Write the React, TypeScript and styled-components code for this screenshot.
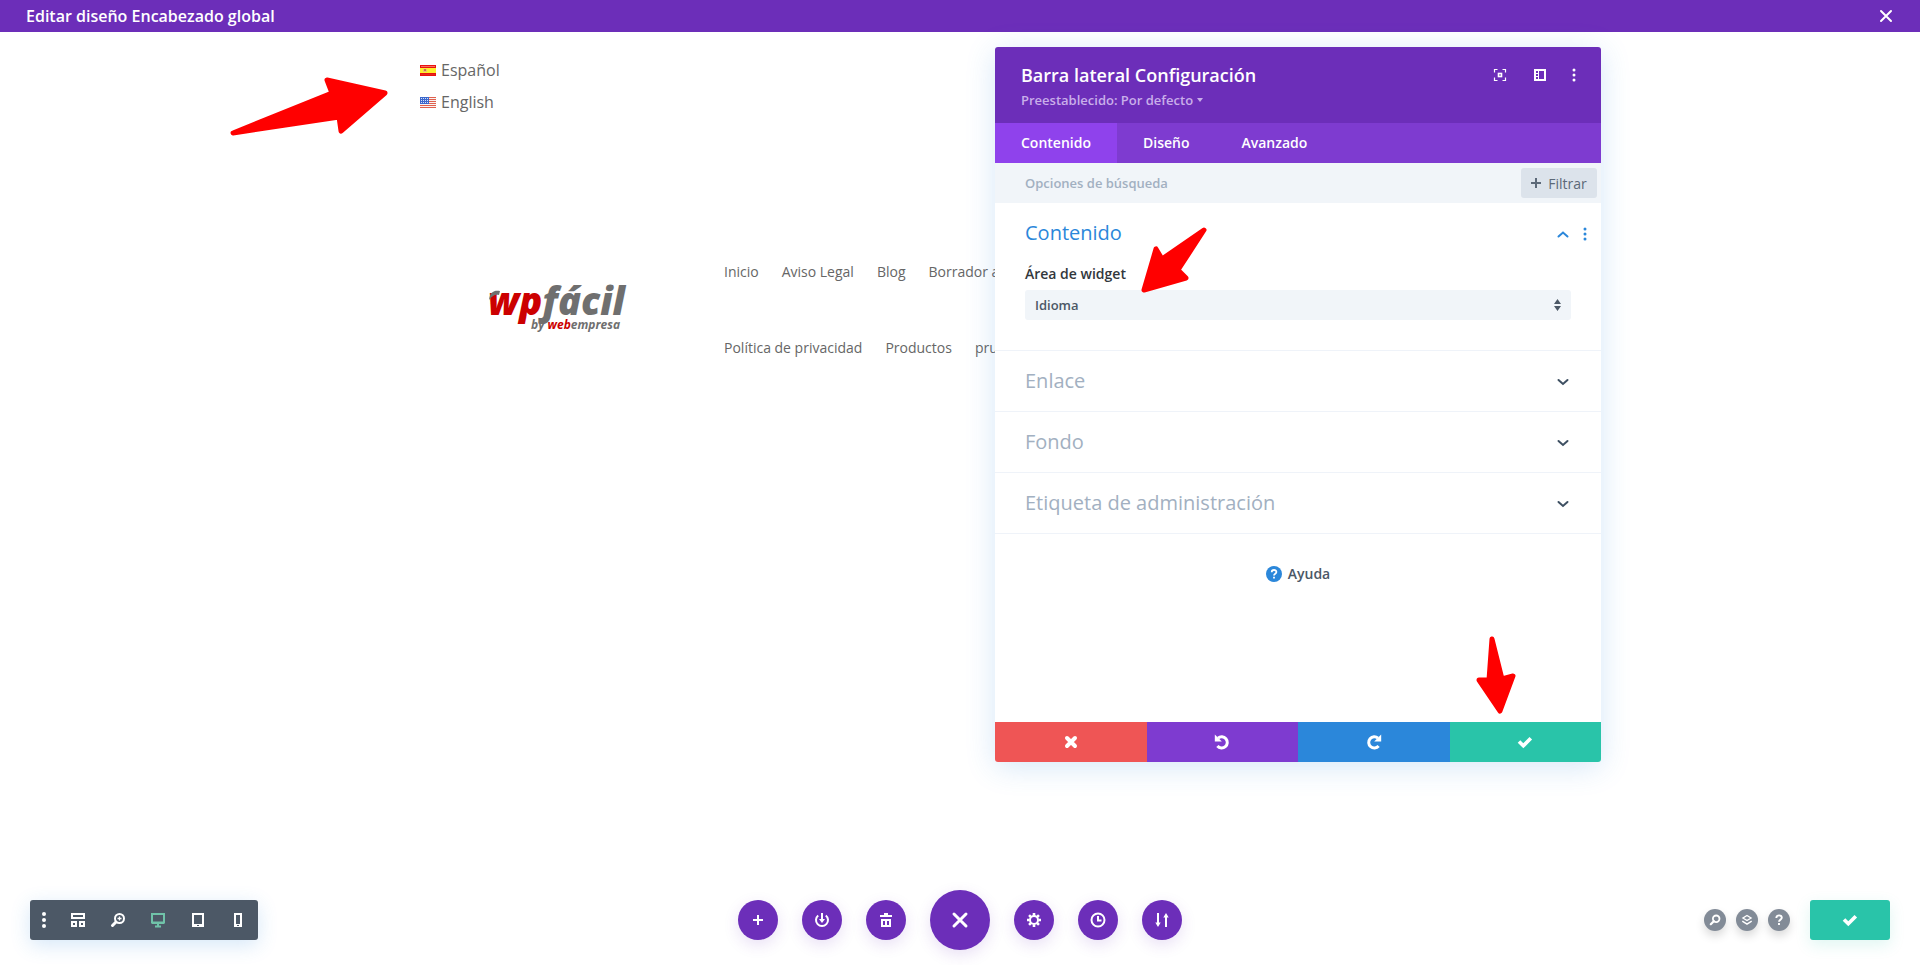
import React from "react";
import styled, { createGlobalStyle } from "styled-components";

const purple = "#6c2eb9";
const teal = "#29c4a9";
const blue = "#2b87da";
const slate = "#4c5866";

const GlobalStyle = createGlobalStyle`
  *, *::before, *::after { box-sizing: border-box; }
  body {
    margin: 0;
    background: #fff;
    color: #666;
    font-family: "Open Sans", "Noto Sans", sans-serif;
    font-size: 14px;
  }
  button, input, select { font: inherit; }
  button { border: 0; padding: 0; cursor: pointer; }
  svg { display: block; flex: none; overflow: visible; }
`;

const Page = styled.div`
  position: relative;
  display: flex;
  flex-direction: column;
  min-height: 100vh;
  overflow: hidden;
`;

const TopBar = styled.header`
  display: flex;
  align-items: center;
  justify-content: space-between;
  height: 32px;
  padding: 0 24px 0 26px;
  background: ${purple};
  color: #fff;
`;

const TopTitle = styled.h1`
  margin: 0;
  font-size: 16px;
  line-height: 24px;
  font-weight: 600;
`;

const IconButton = styled.button`
  display: flex;
  align-items: center;
  justify-content: center;
  width: 20px;
  height: 20px;
  background: none;
  color: ${(p) => p.color ?? "#fff"};
`;

const Container = styled.main`
  position: relative;
  width: 80%;
  max-width: 1080px;
  margin: 0 auto;
  padding-top: 26px;
`;

const Languages = styled.ul`
  list-style: none;
  margin: 0;
  padding: 0;
  display: grid;
  gap: 8px;
`;

const LanguageLink = styled.a`
  display: inline-flex;
  align-items: center;
  gap: 5px;
  color: #666;
  font-size: 16px;
  line-height: 24px;
  text-decoration: none;
`;

const SiteHeader = styled.div`
  display: flex;
  align-items: center;
  margin-top: 119px;
`;

const LogoColumn = styled.div`
  flex: none;
  width: 304px;
  padding: 0 0 6px 68px;
`;

const Menu = styled.nav`
  min-width: 0;
`;

const MenuRow = styled.div`
  display: flex;
  align-items: center;
  gap: 23px;
  height: 76px;
  white-space: nowrap;
`;

const MenuLink = styled.a`
  color: #666;
  font-size: 14px;
  text-decoration: none;
`;

const Modal = styled.section`
  position: absolute;
  top: 47px;
  left: calc(50% + 35px);
  display: flex;
  flex-direction: column;
  width: 606px;
  border-radius: 3px;
  background: #fff;
  box-shadow: 0 5px 30px rgba(43, 135, 218, 0.2);
`;

const ModalHeader = styled.div`
  display: flex;
  justify-content: space-between;
  height: 76px;
  padding: 16px 23px 0 26px;
  border-radius: 3px 3px 0 0;
  background: ${purple};
`;

const ModalTitle = styled.h2`
  margin: 0;
  color: #fff;
  font-size: 18px;
  line-height: 24px;
  font-weight: 600;
`;

const PresetButton = styled.button`
  display: flex;
  align-items: center;
  gap: 4px;
  background: none;
  color: #c9aeea;
  font-size: 13px;
  line-height: 26px;
  font-weight: 600;
`;

const ModalTools = styled.div`
  display: flex;
  gap: 20px;
  height: 24px;
  align-items: center;
`;

const ToolButton = styled(IconButton)<{ $narrow?: boolean }>`
  width: ${(p) => (p.$narrow ? "8px" : "20px")};
`;

const Tabs = styled.div`
  display: flex;
  height: 40px;
  background: #7e3bd0;
`;

const Tab = styled.button<{ $active?: boolean }>`
  padding: 0 26px;
  background: ${(p) => (p.$active ? "#8f42ec" : "transparent")};
  color: #fff;
  font-size: 14px;
  line-height: 20px;
  font-weight: 600;
`;

const SearchRow = styled.div`
  display: flex;
  align-items: center;
  height: 40px;
  padding: 0 4px 0 30px;
  background: #f1f5f9;
`;

const SearchInput = styled.input`
  flex: 1;
  min-width: 0;
  height: 30px;
  padding: 0;
  border: 0;
  background: none;
  color: ${slate};
  font-size: 13px;
  font-weight: 600;
  &::placeholder { color: #a2b0c1; opacity: 1; }
`;

const FilterButton = styled.button`
  display: flex;
  align-items: center;
  justify-content: center;
  gap: 7px;
  width: 76px;
  height: 30px;
  border-radius: 3px;
  background: #dce3eb;
  color: #5c6978;
  font-size: 14px;
`;

const Body = styled.div`
  min-height: 519px;
`;

const Group = styled.section<{ $open?: boolean }>`
  padding-bottom: ${(p) => (p.$open ? "30px" : "0")};
  border-bottom: 1px solid #eff3f9;
`;

const GroupHeader = styled.div`
  display: flex;
  align-items: center;
  height: 60px;
  padding: 0 5px 0 30px;
`;

const GroupTitle = styled.h3<{ $open?: boolean }>`
  flex: 1;
  margin: 0;
  color: ${(p) => (p.$open ? blue : "#a2b0c1")};
  font-size: 20px;
  line-height: 28px;
  font-weight: 400;
`;

const GroupActions = styled.div<{ $open?: boolean }>`
  display: flex;
  gap: 2px;
  width: 43px;
  padding-top: ${(p) => (p.$open ? "2px" : "0")};
`;

const Field = styled.div`
  display: flex;
  flex-direction: column;
  gap: 5px;
  padding: 0 30px;
`;

const Label = styled.label`
  color: #32373c;
  font-size: 14px;
  line-height: 22px;
  font-weight: 600;
`;

const SelectBox = styled.div`
  position: relative;
  svg {
    position: absolute;
    right: 10px;
    top: 9px;
    pointer-events: none;
  }
`;

const Select = styled.select`
  display: block;
  appearance: none;
  width: 100%;
  height: 30px;
  padding: 0 30px 0 10px;
  border: 0;
  border-radius: 3px;
  background: #f1f5f9;
  color: ${slate};
  font-size: 13px;
  font-weight: 600;
`;

const Help = styled.button`
  display: flex;
  align-items: center;
  gap: 6px;
  margin: 30px auto 0;
  background: none;
  color: ${slate};
  font-size: 14px;
  line-height: 20px;
  font-weight: 600;
`;

const ModalFooter = styled.div`
  display: grid;
  grid-template-columns: repeat(4, 1fr);
  height: 40px;
  border-radius: 0 0 3px 3px;
  overflow: hidden;
`;

const FooterButton = styled.button<{ $bg: string }>`
  display: flex;
  align-items: center;
  justify-content: center;
  background: ${(p) => p.$bg};
  color: #fff;
`;

const BottomBar = styled.footer`
  display: grid;
  grid-template-columns: 1fr auto 1fr;
  align-items: center;
  margin-top: auto;
  padding: 0 30px 15px;
`;

const ViewTools = styled.div`
  display: flex;
  justify-self: start;
  height: 40px;
  border-radius: 3px;
  background: ${slate};
  box-shadow: 0 5px 20px rgba(43, 135, 218, 0.2);
`;

const ViewButton = styled.button<{ $active?: boolean; $first?: boolean }>`
  display: flex;
  align-items: center;
  justify-content: center;
  width: ${(p) => (p.$first ? "28px" : "40px")};
  background: none;
  color: ${(p) => (p.$active ? "#70c3a9" : "#fff")};
`;

const Circles = styled.div`
  display: flex;
  align-items: center;
  gap: 24px;
`;

const Circle = styled.button<{ $large?: boolean }>`
  display: flex;
  align-items: center;
  justify-content: center;
  width: ${(p) => (p.$large ? "60px" : "40px")};
  height: ${(p) => (p.$large ? "60px" : "40px")};
  border-radius: 50%;
  background: ${purple};
  color: #fff;
  box-shadow: 0 5px 15px rgba(108, 46, 185, 0.15);
`;

const RightTools = styled.div`
  display: flex;
  align-items: center;
  justify-self: end;
  gap: 10px;
`;

const SmallCircle = styled.button`
  display: flex;
  align-items: center;
  justify-content: center;
  width: 22px;
  height: 22px;
  border-radius: 50%;
  background: #828b97;
  color: #fff;
  box-shadow: 0 5px 10px rgba(0, 0, 0, 0.15);
`;

const SaveButton = styled.button`
  display: flex;
  align-items: center;
  justify-content: center;
  width: 80px;
  height: 40px;
  margin-left: 10px;
  border-radius: 3px;
  background: ${teal};
  color: #fff;
  box-shadow: 0 5px 15px rgba(41, 196, 169, 0.15);
`;

const Arrow = styled.svg<{ $x: number; $y: number }>`
  position: absolute;
  left: ${(p) => p.$x}px;
  top: ${(p) => p.$y}px;
  fill: #f00;
  stroke: #f00;
  stroke-width: 5;
  stroke-linejoin: round;
  pointer-events: none;
`;

const Dots = ({ gap = 5, r = 1.5 }: { gap?: number; r?: number }) => (
  <svg width="16" height="16" viewBox="0 0 16 16" fill="currentColor">
    <circle cx="8" cy={8 - gap} r={r} />
    <circle cx="8" cy="8" r={r} />
    <circle cx="8" cy={8 + gap} r={r} />
  </svg>
);

const Cross = ({ size, width }: { size: number; width: number }) => (
  <svg width={size} height={size} viewBox={`0 0 ${size} ${size}`} stroke="currentColor" strokeWidth={width} strokeLinecap="round">
    <path d={`M2 2L${size - 2} ${size - 2}M${size - 2} 2L2 ${size - 2}`} />
  </svg>
);

const Check = () => (
  <svg width="16" height="16" viewBox="0 0 16 16" fill="none" stroke="currentColor" strokeWidth="3.6">
    <path d="M2 7.500L6.300 11.800L13.800 4.200" />
  </svg>
);

const Chevron = ({ up }: { up?: boolean }) => (
  <svg width="20" height="20" viewBox="0 0 20 20" fill="none" stroke="currentColor" strokeWidth="2" strokeLinecap="round">
    <path d={up ? "M5.500 12.500L10 8.500L14.500 12.500" : "M5.500 9L10 13L14.500 9"} />
  </svg>
);

const Plus = ({ size = 10 }: { size?: number }) => (
  <svg width={size} height={size} viewBox="0 0 10 10" stroke="currentColor" strokeWidth="2">
    <path d="M5 0V10M0 5H10" />
  </svg>
);

const Magnifier = () => (
  <svg width="16" height="16" viewBox="0 0 16 16" fill="none" stroke="currentColor">
    <circle cx="9.500" cy="6.500" r="4.500" strokeWidth="2" />
    <path d="M9.500 4.500V8.500M7.500 6.500H11.500" strokeWidth="1.300" />
    <path d="M6 10L2.500 13.500" strokeWidth="3" strokeLinecap="round" />
  </svg>
);

const Redo = ({ flip }: { flip?: boolean }) => (
  <svg width="16" height="16" viewBox="0 0 16 16" fill="none" stroke="currentColor">
    <g transform={flip ? "matrix(-1 0 0 1 16 0)" : undefined}>
      <path d="M12.600 12A5.600 5.600 0 1 1 12 4.200" strokeWidth="3" />
      <path d="M15.200 0.600V7.600H8.200Z" fill="currentColor" stroke="none" />
    </g>
  </svg>
);

const SpainFlag = () => (
  <svg width="16" height="11" viewBox="0 0 16 11">
    <rect width="16" height="11" fill="#ea1010" />
    <rect x="1" y="1" width="14" height="1" fill="#f4705c" />
    <rect x="1" y="9" width="14" height="1" fill="#e02a1c" />
    <rect y="3" width="16" height="5" fill="#fdf02e" />
    <rect x="3" y="4" width="4" height="3" fill="#ecc46a" />
    <rect x="4" y="4" width="2" height="2" fill="#d0704a" />
  </svg>
);

const UsaFlag = () => (
  <svg width="16" height="11" viewBox="0 0 16 11">
    <rect width="16" height="11" fill="#f8f4f2" />
    {[0, 2, 4, 6, 8, 10].map((y) => (
      <rect key={y} y={y} width="16" height="1" fill="#e0604e" />
    ))}
    <rect width="9" height="7" fill="#3c68cc" />
    {[1, 3, 5].map((y) =>
      [1, 3, 5, 7].map((x) => <rect key={`${x}-${y}`} x={x} y={y} width="1" height="1" fill="#d4e0fa" />)
    )}
  </svg>
);

const Logo = () => (
  <svg width="138" height="52" viewBox="0 0 138 52" fontFamily='"Open Sans", sans-serif' fontStyle="italic" fontWeight="700">
    <text x="0" y="35" fontSize="38" fontWeight="800" fill="#c00">
      wp<tspan fill="#6f6f6f">fácil</tspan>
    </text>
    <path d="M1 20C2 12 6 10 12 11L11 15C7 14 4 16 1 20Z" fill="#6f6f6f" />
    <text x="43" y="49" fontSize="12" fill="#6f6f6f">
      by <tspan fill="#c00">web</tspan>empresa
    </text>
  </svg>
);

const closedGroups = ["Enlace", "Fondo", "Etiqueta de administración"];

export default function App() {
  return (
    <Page>
      <GlobalStyle />
      <TopBar>
        <TopTitle>Editar diseño Encabezado global</TopTitle>
        <IconButton aria-label="Cerrar">
          <Cross size={14} width={2} />
        </IconButton>
      </TopBar>

      <Container>
        <Languages>
          <li>
            <LanguageLink href="#es"><SpainFlag />Español</LanguageLink>
          </li>
          <li>
            <LanguageLink href="#en"><UsaFlag />English</LanguageLink>
          </li>
        </Languages>
        <Arrow $x={-192} $y={42} width="162" height="64" viewBox="0 0 162 64">
          <path d="M5 59L104 19L99 6L157 19L113 57L111 43Z" />
        </Arrow>
        <SiteHeader>
          <LogoColumn><Logo /></LogoColumn>
          <Menu>
            <MenuRow>
              <MenuLink href="#inicio">Inicio</MenuLink>
              <MenuLink href="#aviso">Aviso Legal</MenuLink>
              <MenuLink href="#blog">Blog</MenuLink>
              <MenuLink href="#borrador">Borrador aviso</MenuLink>
            </MenuRow>
            <MenuRow>
              <MenuLink href="#privacidad">Política de privacidad</MenuLink>
              <MenuLink href="#productos">Productos</MenuLink>
              <MenuLink href="#prueba">prueba</MenuLink>
            </MenuRow>
          </Menu>
        </SiteHeader>
      </Container>

      <Modal aria-label="Barra lateral Configuración">
        <ModalHeader>
          <div>
            <ModalTitle>Barra lateral Configuración</ModalTitle>
            <PresetButton>
              Preestablecido: Por defecto
              <svg width="6" height="4" viewBox="0 0 6 4" fill="currentColor"><path d="M0 0H6L3 4Z" /></svg>
            </PresetButton>
          </div>
          <ModalTools>
            <ToolButton aria-label="Expandir">
              <svg width="12" height="12" viewBox="0 0 12 12" fill="none" stroke="currentColor">
                <path d="M0.500 3.500V0.500H3.500M8.500 0.500H11.500V3.500M11.500 8.500V11.500H8.500M3.500 11.500H0.500V8.500" strokeWidth="1.200" />
                <rect x="4.500" y="4.500" width="3" height="3" strokeWidth="1.600" />
              </svg>
            </ToolButton>
            <ToolButton aria-label="Acoplar">
              <svg width="12" height="12" viewBox="0 0 12 12" fill="none" stroke="currentColor" strokeWidth="2">
                <rect x="1" y="1" width="10" height="10" />
                <path d="M4.500 1V11" strokeWidth="1" />
                <path d="M2 4.500H4M2 7.500H4" strokeWidth="1" />
              </svg>
            </ToolButton>
            <ToolButton $narrow aria-label="Más opciones"><Dots /></ToolButton>
          </ModalTools>
        </ModalHeader>
        <Tabs>
          <Tab $active>Contenido</Tab>
          <Tab>Diseño</Tab>
          <Tab>Avanzado</Tab>
        </Tabs>
        <SearchRow>
          <SearchInput aria-label="Opciones de búsqueda" placeholder="Opciones de búsqueda" />
          <FilterButton><Plus />Filtrar</FilterButton>
        </SearchRow>
        <Body>
          <Group $open>
            <GroupHeader>
              <GroupTitle $open>Contenido</GroupTitle>
              <GroupActions $open>
                <IconButton color={blue} aria-label="Contraer"><Chevron up /></IconButton>
                <IconButton color={blue} aria-label="Opciones"><Dots /></IconButton>
              </GroupActions>
            </GroupHeader>
            <Field>
              <Label htmlFor="widget-area">Área de widget</Label>
              <SelectBox>
                <Select id="widget-area" defaultValue="Idioma">
                  <option>Idioma</option>
                </Select>
                <svg width="7" height="12" viewBox="0 0 7 12" fill={slate}><path d="M3.500 0L7 5H0ZM3.500 12L0 7H7Z" /></svg>
              </SelectBox>
            </Field>
          </Group>
          {closedGroups.map((title) => (
            <Group key={title}>
              <GroupHeader>
                <GroupTitle>{title}</GroupTitle>
                <GroupActions>
                  <IconButton color="#3e5062" aria-label={`Abrir ${title}`}><Chevron /></IconButton>
                </GroupActions>
              </GroupHeader>
            </Group>
          ))}
          <Help>
            <svg width="16" height="16" viewBox="0 0 16 16" fill="none" stroke="#fff" strokeWidth="1.800">
              <circle cx="8" cy="8" r="8" fill={blue} stroke="none" />
              <path d="M5.700 6.200C5.700 3.300 10.400 3.300 10.400 6.100C10.400 7.800 8 7.700 8 9.500M8 10.800V12.600" />
            </svg>
            Ayuda
          </Help>
        </Body>
        <ModalFooter>
          <FooterButton $bg="#ef5555" aria-label="Descartar"><Cross size={12} width={4} /></FooterButton>
          <FooterButton $bg="#7e3bd0" aria-label="Deshacer"><Redo flip /></FooterButton>
          <FooterButton $bg={blue} aria-label="Rehacer"><Redo /></FooterButton>
          <FooterButton $bg={teal} aria-label="Guardar"><Check /></FooterButton>
        </ModalFooter>
        <Arrow $x={142} $y={174} width="74" height="76" viewBox="0 0 74 76">
          <path d="M67 9L25 38L19 28L7 69L49 57L41 49Z" />
        </Arrow>
        <Arrow $x={478} $y={586} width="48" height="86" viewBox="0 0 48 86">
          <path d="M19 6L16 47L6 47L27 78L40 43L29 46Z" />
        </Arrow>
      </Modal>

      <BottomBar>
        <ViewTools>
          <ViewButton $first aria-label="Opciones"><Dots gap={6} r={2} /></ViewButton>
          <ViewButton aria-label="Estructura">
            <svg width="14" height="14" viewBox="0 0 14 14" fill="none" stroke="currentColor" strokeWidth="2">
              <rect x="1" y="1" width="12" height="4" />
              <rect x="1" y="9" width="4" height="4" />
              <rect x="9" y="9" width="4" height="4" />
            </svg>
          </ViewButton>
          <ViewButton aria-label="Zoom"><Magnifier /></ViewButton>
          <ViewButton $active aria-label="Escritorio">
            <svg width="14" height="16" viewBox="0 0 14 16" fill="none" stroke="currentColor" strokeWidth="2">
              <rect x="1" y="2" width="12" height="8.500" />
              <path d="M1 11H13M7 11V14M4 14.500H10" />
            </svg>
          </ViewButton>
          <ViewButton aria-label="Tableta">
            <svg width="12" height="14" viewBox="0 0 12 14" fill="none" stroke="currentColor" strokeWidth="2">
              <rect x="1" y="1" width="10" height="12" />
              <path d="M1 12H11" />
              <path d="M5 12.500H7" stroke={slate} strokeWidth="1" />
            </svg>
          </ViewButton>
          <ViewButton aria-label="Teléfono">
            <svg width="8" height="14" viewBox="0 0 8 14" fill="none" stroke="currentColor" strokeWidth="2">
              <rect x="1" y="1" width="6" height="12" />
              <path d="M1 12H7" />
              <path d="M3 12.500H5" stroke={slate} strokeWidth="1" />
            </svg>
          </ViewButton>
        </ViewTools>

        <Circles>
          <Circle aria-label="Añadir"><Plus /></Circle>
          <Circle aria-label="Guardar en biblioteca">
            <svg width="16" height="16" viewBox="0 0 16 16" fill="none" stroke="currentColor" strokeWidth="2">
              <path d="M4.200 3.400A6 6 0 1 0 11.800 3.400M8 1V9" />
              <path d="M5 7H11L8 11Z" fill="currentColor" stroke="none" />
            </svg>
          </Circle>
          <Circle aria-label="Vaciar">
            <svg width="12" height="14" viewBox="0 0 12 14" fill="currentColor">
              <path d="M4 0H8V2H12V4H0V2H4ZM1 6H11V14H1ZM3 8V12H5V8ZM7 8V12H9V8Z" fillRule="evenodd" />
            </svg>
          </Circle>
          <Circle $large aria-label="Cerrar menú"><Cross size={16} width={3} /></Circle>
          <Circle aria-label="Ajustes">
            <svg width="14" height="14" viewBox="0 0 14 14" fill="none" stroke="currentColor">
              <circle cx="7" cy="7" r="4" strokeWidth="2" />
              <path d="M7 0V2.500M7 11.500V14M0 7H2.500M11.500 7H14M2.050 2.050L3.800 3.800M10.200 10.200L11.950 11.950M2.050 11.950L3.800 10.200M10.200 3.800L11.950 2.050" strokeWidth="2.600" />
            </svg>
          </Circle>
          <Circle aria-label="Historial">
            <svg width="16" height="16" viewBox="0 0 16 16" fill="none" stroke="currentColor" strokeWidth="2">
              <circle cx="8" cy="8" r="6.500" />
              <path d="M8 4V8.500H11.500" />
            </svg>
          </Circle>
          <Circle aria-label="Portabilidad">
            <svg width="14" height="14" viewBox="0 0 14 14" fill="none" stroke="currentColor" strokeWidth="2">
              <path d="M3 0V10M11 4V14" />
              <path d="M0.300 9.500H5.700L3 14ZM8.300 4.500H13.700L11 0Z" fill="currentColor" stroke="none" />
            </svg>
          </Circle>
        </Circles>

        <RightTools>
          <SmallCircle aria-label="Buscar">
            <svg width="12" height="12" viewBox="0 0 12 12" fill="none" stroke="currentColor" strokeWidth="1.800">
              <circle cx="7.200" cy="4.800" r="3.300" />
              <path d="M4.800 7.200L1.800 10.200" strokeWidth="2.200" strokeLinecap="round" />
            </svg>
          </SmallCircle>
          <SmallCircle aria-label="Capas">
            <svg width="12" height="12" viewBox="0 0 12 12" fill="none" stroke="currentColor" strokeWidth="1.400">
              <path d="M6 1.500L10 4L6 6.500L2 4Z M1.300 7.200L6 10.200L10.700 7.200" />
            </svg>
          </SmallCircle>
          <SmallCircle aria-label="Ayuda">
            <svg width="12" height="12" viewBox="0 0 12 12" fill="none" stroke="currentColor" strokeWidth="1.900">
              <path d="M3.300 4C3.300 0.400 8.800 0.600 8.800 3.800C8.800 5.700 6 5.600 6 7.800M6 9V11" />
            </svg>
          </SmallCircle>
          <SaveButton aria-label="Guardar"><Check /></SaveButton>
        </RightTools>
      </BottomBar>
    </Page>
  );
}
